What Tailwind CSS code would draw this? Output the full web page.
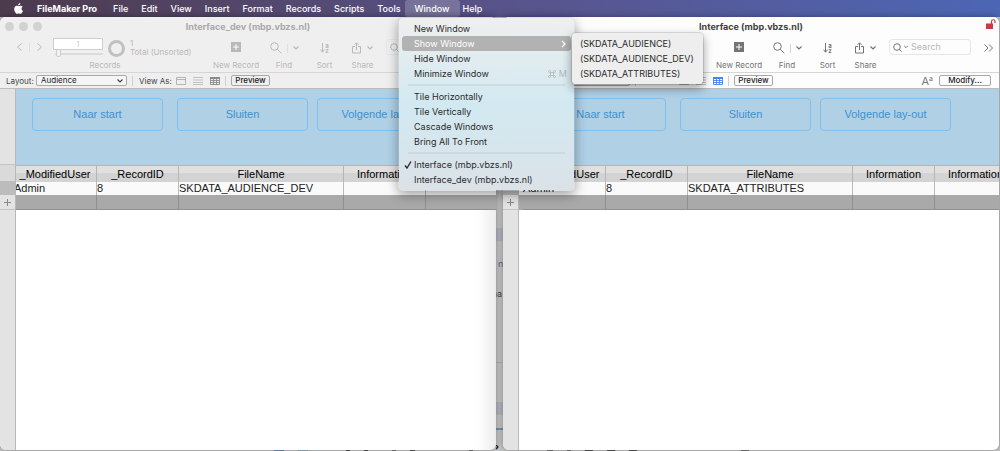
<!DOCTYPE html>
<html lang="nl">
<head>
    <meta charset="UTF-8">
    <meta name="viewport" content="width=device-width, initial-scale=1.0">
    <title>FileMaker Pro</title>
    <script src="https://cdn.jsdelivr.net/npm/@tailwindcss/browser@4"></script>
</head>
<body class="h-screen overflow-hidden flex flex-col relative bg-[#c6c6c6] font-['Inter','Liberation_Sans',sans-serif] text-[9px] leading-[15px] text-[#2b2b2b]">

    <!-- Menu bar -->
    <header class="h-[17px] shrink-0 flex items-center pl-[14px] bg-linear-to-r from-[#4c3a4d] via-[#58538a] to-[#4c66b4] text-white font-medium">
        <svg class="w-[9px] h-[11px] mr-[14px] -mt-px" viewBox="0 0 18 22" fill="currentColor"><path d="M12.6 0c.1 1.300-.4 2.500-1.200 3.500-.8.900-2 1.600-3.200 1.500-.1-1.200.5-2.500 1.200-3.300C10.200.7 11.600.1 12.600 0zM17.300 7.500c-1.400.900-2.200 2.100-2.200 3.800 0 1.900 1.100 3.400 2.900 4.100-.4 1.300-1.100 2.600-1.900 3.800-.9 1.300-1.800 2.600-3.200 2.600s-1.800-.8-3.400-.8-2.100.8-3.400.9c-1.400.1-2.400-1.400-3.300-2.700C.900 16.500-.6 11.700 1.300 8.400c.9-1.600 2.600-2.700 4.400-2.700 1.400 0 2.700.9 3.500.9s2.400-1.100 4.100-.9c.7 0 2.700.3 4 1.800z"/></svg>
        <nav class="flex items-center h-full gap-[13px]">
            <button class="font-bold mr-[3px]">FileMaker Pro</button>
            <button>File</button>
            <button>Edit</button>
            <button>View</button>
            <button>Insert</button>
            <button>Format</button>
            <button>Records</button>
            <button>Scripts</button>
            <button>Tools</button>
            <button class="h-full px-[10px] -ml-[9px] -mr-[10px] rounded-[3px] bg-white/20">Window</button>
            <button>Help</button>
        </nav>
    </header>

    <!-- Desktop with the two windows -->
    <main id="desktop" class="relative flex-1 min-h-0 flex gap-[7px] pr-px pb-px">
        <div class="absolute inset-y-0 left-[496px] w-[7px] overflow-hidden text-[#444]">
            <div class="absolute top-[211px] w-full h-[13px] bg-[#b4b6c0]"></div>
            <span class="absolute top-[239px] left-[2px] text-[#5c6680]">n</span>
            <span class="absolute top-[269px] -left-[4px]">aa</span>
            <div class="absolute top-[345px] w-full h-px bg-[#b0b0b0]"></div>
            <span class="absolute top-[357px] -left-[4px] text-[7px] text-[#7a7f90]">e</span>
            <div class="absolute top-[385px] w-full h-[13px] bg-[#b4b6c0]"></div>
            <div class="absolute top-[411px] w-full h-[2px] bg-[#6f93bd]"></div>
            <span class="absolute top-[422px] -left-[1px] font-bold text-black">›</span>
        </div>
        <div class="absolute bottom-0 left-[274px] right-0 h-px flex gap-[14px]">
            <i class="w-[10px] bg-[#5b93c4]"></i><i class="w-[10px] bg-[#8fb4d4]"></i><i class="w-[4px] ml-[24px] bg-[#555]"></i><i class="w-[4px] bg-[#555]"></i><i class="w-[4px] ml-[10px] bg-[#777]"></i><i class="w-[5px] bg-[#555]"></i><i class="w-[4px] ml-[40px] bg-[#777]"></i><i class="w-[6px] ml-[60px] bg-[#777]"></i><i class="w-[4px] bg-[#777]"></i><i class="w-[8px] bg-[#555]"></i><i class="w-[8px] bg-[#555]"></i><i class="w-[8px] bg-[#555]"></i><i class="w-[8px] ml-[90px] bg-[#777]"></i>
        </div>
    </main>

    <!-- Window menu -->
    <div class="absolute z-20 top-[17px] left-[398px] w-[177px] pt-[3px] pb-[3px] px-[3px] rounded-[5px] border border-black/10 shadow-[0_4px_12px_rgba(0,0,0,0.35)] bg-linear-to-b from-[#efefef] via-[#d2e9f1] to-[#dbe2e8] bg-clip-padding flex flex-col">
        <button class="h-[15px] px-[12px] text-left">New Window</button>
        <button class="h-[15px] pl-[12px] pr-[5px] rounded-[3px] bg-[#b2b2b2] text-white flex items-center justify-between">Show Window
            <svg class="w-[5px] h-[8px]" viewBox="0 0 5 8" fill="none" stroke="currentColor" stroke-width="1.300"><path d="M1 1l3 3-3 3"/></svg>
        </button>
        <button class="h-[15px] px-[12px] text-left">Hide Window</button>
        <button class="h-[15px] pl-[12px] pr-[4px] flex items-center justify-between">Minimize Window
            <span class="flex items-center gap-[3px] text-[#b3b8ba]"><svg class="w-[8px] h-[8px]" viewBox="0 0 16 16" fill="none" stroke="currentColor" stroke-width="1.600"><path d="M5 5h6v6H5zM5 5H3a2 2 0 1 1 2-2zM11 5V3a2 2 0 1 1 2 2zM11 11h2a2 2 0 1 1-2 2zM5 11v2a2 2 0 1 1-2-2z"/></svg>M</span>
        </button>
        <hr class="my-[3px] mx-[6px] h-[2px] border-0 bg-black/5">
        <button class="h-[15px] px-[12px] text-left">Tile Horizontally</button>
        <button class="h-[15px] px-[12px] text-left">Tile Vertically</button>
        <button class="h-[15px] px-[12px] text-left">Cascade Windows</button>
        <button class="h-[15px] px-[12px] text-left">Bring All To Front</button>
        <hr class="my-[3px] mx-[6px] h-[2px] border-0 bg-black/5">
        <button class="h-[15px] pl-[2px] flex items-center gap-[2px]">
            <svg class="w-[8px] h-[8px]" viewBox="0 0 8 8" fill="none" stroke="currentColor" stroke-width="1.400"><path d="M1 4.500l2 2.500 4-6.500"/></svg>
            Interface (mbp.vbzs.nl)
        </button>
        <button class="h-[15px] px-[12px] text-left">Interface_dev (mbp.vbzs.nl)</button>
    </div>

    <!-- Show Window submenu -->
    <div class="absolute z-30 top-[32px] left-[571px] w-[133px] py-[3px] px-[8px] rounded-[5px] border border-black/10 shadow-[0_4px_10px_rgba(0,0,0,0.35)] bg-[#eeeeee] bg-clip-padding flex flex-col">
        <button class="h-[15px] text-left whitespace-nowrap">(SKDATA_AUDIENCE)</button>
        <button class="h-[15px] text-left whitespace-nowrap">(SKDATA_AUDIENCE_DEV)</button>
        <button class="h-[15px] text-left whitespace-nowrap">(SKDATA_ATTRIBUTES)</button>
    </div>

    <script>
        const windows = [
            {
                id: "dev", title: "Interface_dev (mbp.vbzs.nl)", layout: "Audience", file: "SKDATA_AUDIENCE_DEV",
                chrome: "bg-[#efefef]", titleColor: "text-[#a9a9a9]", tools: "text-[#b9b9b9]", lights: "bg-[#d2d2d2]",
                viewIcon: "text-[#8a8a8a]", shift: "-ml-[2px]", modify: "invisible", lock: "hidden", fade: "shadow-[inset_-24px_0_18px_-18px_rgba(0,0,0,0.100)]"
            },
            {
                id: "main", title: "Interface (mbp.vbzs.nl)", layout: "", file: "SKDATA_ATTRIBUTES",
                chrome: "bg-[#fdfdfd]", titleColor: "text-[#404040]", tools: "text-[#747474]", lights: "bg-[#e05a50]",
                viewIcon: "text-[#4a83f0]", shift: "ml-[4px]", modify: "", lock: "", fade: ""
            }
        ];

        const chevron = `<svg class="w-[6px] h-[4px]" viewBox="0 0 6 4" fill="none" stroke="currentColor" stroke-width="1.200"><path d="M.5.500L3 3 5.500.500"/></svg>`;

        function windowHtml(w) {
            return `
            <section class="relative flex-1 min-w-0 flex flex-col overflow-hidden rounded-[6px] shadow-[0_0_6px_rgba(0,0,0,0.35)] bg-white">
                <div class="${w.chrome} border-b border-[#bdbdbd]">
                    <div class="relative h-[19px] flex items-center gap-[5px] pl-[5px]">
                        <i class="size-[9px] rounded-full ${w.lights}"></i>
                        <i class="size-[9px] rounded-full ${w.lights}"></i>
                        <i class="size-[9px] rounded-full ${w.lights}"></i>
                        <h1 class="absolute inset-x-0 text-center font-bold ${w.titleColor}">${w.title}</h1>
                        <svg class="${w.lock} absolute right-[3px] top-[2px] w-[10px] h-[10px] text-[#c93a48]" viewBox="0 0 10 10"><path d="M0 4.500h7V10H0z" fill="currentColor"/><path d="M5.500 5V2.500a1.700 1.700 0 0 1 3.500 0V4" fill="none" stroke="currentColor" stroke-width="1.200"/></svg>
                    </div>
                    <div class="h-[36px] flex items-start pl-[17px] text-[8px] leading-[10px] whitespace-nowrap ${w.tools}">
                        <div class="flex items-center gap-[7px] w-[36px] h-[22px]">
                            <svg class="w-[5px] h-[8px]" viewBox="0 0 5 8" fill="none" stroke="currentColor"><path d="M4.500.500L.500 4l4 3.500"/></svg>
                            <i class="w-px h-[9px] bg-current/30"></i>
                            <svg class="w-[5px] h-[8px]" viewBox="0 0 5 8" fill="none" stroke="currentColor"><path d="M.5.500L4.500 4l-4 3.500"/></svg>
                        </div>
                        <div class="w-[161px]">
                            <div class="flex items-center gap-[5px] h-[24px]">
                                <div class="relative w-[50px] h-[22px] pt-px">
                                    <input aria-label="Record" value="1" class="block w-full h-[12px] border border-[#cfcfcf] bg-white text-center text-[7px] text-[#cccccc]">
                                    <i class="block mt-[3px] ml-[2px] h-[2px] bg-[#dcdcdc]"></i>
                                    <i class="absolute top-[12px] left-[3px] w-[5px] h-[8px] rounded-[2px] border border-[#cccccc] bg-[#f4f4f4]"></i>
                                </div>
                                <i class="size-[17px] rounded-full border-[3px] border-[#c0c0c0]"></i>
                                <p class="leading-[9px]">1<br>Total (Unsorted)</p>
                            </div>
                            <p class="w-[104px] text-center">Records</p>
                        </div>
                        <div class="w-[44px] flex flex-col items-center">
                            <button aria-label="New Record" class="h-[22px] mb-[2px]"><svg class="w-[10px] h-[10px]" viewBox="0 0 10 10"><path d="M0 0h10v10H0z" fill="currentColor"/><path d="M5 2v6M2 5h6" stroke="#fff"/></svg></button>
                            <span>New Record</span>
                        </div>
                        <div class="w-[52px] flex flex-col items-center">
                            <button aria-label="Find" class="h-[24px] flex items-center gap-[5px]">
                                <svg class="w-[12px] h-[12px]" viewBox="0 0 12 12" fill="none" stroke="currentColor"><circle cx="4.500" cy="4.500" r="3.800"/><path d="M7.300 7.300l4 4"/></svg>
                                <i class="w-px h-[9px] bg-current/30"></i>${chevron}
                            </button>
                            <span>Find</span>
                        </div>
                        <div class="w-[29px] flex flex-col items-center">
                            <button aria-label="Sort" class="h-[24px] flex items-center">
                                <svg class="w-[5px] h-[10px]" viewBox="0 0 5 10" fill="none" stroke="currentColor"><path d="M2.500 0v9M.5 6.700l2 2.500 2-2.500"/></svg>
                                <span class="text-[6px] leading-[5px] font-bold">a<br>z</span>
                            </button>
                            <span>Sort</span>
                        </div>
                        <div class="w-[47px] flex flex-col items-center">
                            <button aria-label="Share" class="h-[24px] flex items-center gap-[6px]">
                                <svg class="w-[9px] h-[12px]" viewBox="0 0 9 12" fill="none" stroke="currentColor"><path d="M3 4.500H.500v6.500h8V4.500H6M4.500 8V1M2.500 2.800l2-2 2 2"/></svg>${chevron}
                            </button>
                            <span>Share</span>
                        </div>
                        <label class="mt-[3px] w-[82px] h-[16px] px-[3px] rounded-[3px] border border-[#e6e6e6] flex items-center gap-[2px]">
                            <svg class="shrink-0 w-[9px] h-[9px]" viewBox="0 0 9 9" fill="none" stroke="currentColor"><circle cx="4" cy="4" r="3.300"/><path d="M6.300 6.300l2.400 2.400"/></svg>
                            <svg class="shrink-0 w-[4px] h-[4px]" viewBox="0 0 6 4" fill="none" stroke="currentColor" stroke-width="1.500"><path d="M.5.500L3 3 5.500.500"/></svg>
                            <input type="text" placeholder="Search" aria-label="Search" class="ml-px min-w-0 w-full text-[9px] placeholder:text-[#b8b8b8]">
                        </label>
                        <button aria-label="More" class="ml-auto mr-[6px] h-[24px]"><svg class="w-[9px] h-[8px]" viewBox="0 0 9 8" fill="none" stroke="currentColor"><path d="M.5.500L4 4 .5 7.500M5 .5L8.500 4 5 7.500"/></svg></button>
                    </div>
                    <div class="h-[16px] border-t border-[#d6d6d6] flex items-center pl-[6px] pr-[8px] text-[8px] leading-[10px] text-[#444]">
                        <label for="layout-${w.id}" class="w-[30px]">Layout:</label>
                        <div class="relative w-[91px]">
                            <select id="layout-${w.id}" class="block appearance-none w-full h-[11px] pl-[4px] rounded-[2px] border border-[#a8a8a8] bg-white/40 leading-[9px] text-[#222]"><option>${w.layout}</option></select>
                            <span class="absolute right-[4px] top-[4px]">${chevron}</span>
                        </div>
                        <i class="w-px h-[10px] ml-[5px] mr-[6px] bg-[#d0d0d0]"></i>
                        <span class="w-[37px]">View As:</span>
                        <div class="flex gap-[7px] text-[#b5b5b5]">
                            <svg class="w-[10px] h-[8px]" viewBox="0 0 10 8" fill="none" stroke="currentColor"><path d="M.5.500h9v7h-9zM0 2.500h10"/></svg>
                            <svg class="w-[10px] h-[8px]" viewBox="0 0 10 8" stroke="currentColor" stroke-width=".8"><path d="M0 .5h10M0 3h10M0 5.500h10M0 7.500h10"/></svg>
                            <svg class="w-[10px] h-[8px] ${w.viewIcon}" viewBox="0 0 10 8" fill="none" stroke="currentColor"><path d="M0 1h10" stroke-width="2"/><path d="M.5 1v6.500h9V1M0 3.500h10M0 5.500h10M3.500 2v6M6.500 2v6" stroke-width=".9"/></svg>
                        </div>
                        <i class="w-px h-[10px] ml-[5px] mr-[5px] bg-[#d0d0d0]"></i>
                        <button class="w-[39px] h-[11px] rounded-[2px] border border-[#a8a8a8] font-medium leading-[9px] text-[#222]">Preview</button>
                        <span class="${w.modify} ml-auto mr-[6px] text-[11px] text-[#777]">A<sup class="text-[7px]">a</sup></span>
                        <button class="${w.modify} w-[52px] h-[11px] rounded-[2px] border border-[#a8a8a8] font-medium leading-[9px] text-[#222]">Modify...</button>
                    </div>
                </div>
                <div class="flex-1 min-h-0 flex ${w.fade}">
                    <aside class="w-[16px] shrink-0 border-r border-[#b8b8b8] bg-[#e3e3e3] text-center text-[#888]">
                        <div class="h-[76px] border-b border-[#c4c4c4]"></div>
                        <div class="h-[16px] bg-[#dadada]"></div>
                        <div class="h-[14px] bg-[#bcbcbc]"></div>
                        <button aria-label="Add record" class="w-full h-[15px] border-b border-[#c4c4c4] flex items-center justify-center"><svg class="w-[7px] h-[7px]" viewBox="0 0 7 7" stroke="currentColor"><path d="M3.500 0v7M0 3.500h7"/></svg></button>
                    </aside>
                    <div class="flex-1 min-w-0 overflow-hidden font-['Liberation_Sans',Arial,sans-serif] text-[11px]">
                        <div class="h-[76px] pt-[9px] pl-[16px] flex items-start gap-[14px] bg-[#b0d0e6] text-[#4190cc]">
                            <button class="w-[131px] shrink-0 h-[33px] rounded-[4px] border border-[#7dc0ef]">Naar start</button>
                            <button class="w-[131px] shrink-0 h-[33px] rounded-[4px] border border-[#7dc0ef]">Sluiten</button>
                            <button class="w-[131px] shrink-0 h-[33px] -ml-[5px] rounded-[4px] border border-[#7dc0ef]">Volgende lay-out</button>
                        </div>
                        <div class="bg-[linear-gradient(#e0e0e0_8px,#d3d3d3_8px,#d3d3d3_17px,#fafafa_17px,#fafafa_30px,#a9a9a9_30px)]">
                            <table class="w-[494px] table-fixed border-separate border-spacing-0 text-[#222] ${w.shift}">
                                <colgroup><col class="w-[83px]"><col class="w-[82px]"><col class="w-[165px]"><col class="w-[82px]"><col class="w-[82px]"></colgroup>
                                <thead>
                                    <tr class="h-[17px] leading-[15px] text-black whitespace-nowrap">
                                        <th class="p-0 font-normal border-t border-r border-[#b5b5b5]">_ModifiedUser</th>
                                        <th class="p-0 font-normal border-t border-r border-[#b5b5b5]">_RecordID</th>
                                        <th class="p-0 font-normal border-t border-r border-[#b5b5b5]">FileName</th>
                                        <th class="p-0 font-normal border-t border-r border-[#b5b5b5]">Information</th>
                                        <th class="p-0 font-normal border-t border-r border-[#b5b5b5]">Information</th>
                                    </tr>
                                </thead>
                                <tbody>
                                    <tr class="h-[13px] leading-[13px] bg-[#fafafa]">
                                        <td class="p-0 border-r border-[#bbb]">Admin</td>
                                        <td class="p-0 border-r border-[#bbb]">8</td>
                                        <td class="p-0 border-r border-[#bbb]">${w.file}</td>
                                        <td class="p-0 border-r border-[#bbb]"></td>
                                        <td class="p-0 border-r border-[#bbb]"></td>
                                    </tr>
                                    <tr class="h-[15px] bg-[#a9a9a9]">
                                        <td class="p-0 border-r border-b border-[#909090]"></td>
                                        <td class="p-0 border-r border-b border-[#909090]"></td>
                                        <td class="p-0 border-r border-b border-[#909090]"></td>
                                        <td class="p-0 border-r border-b border-[#909090]"></td>
                                        <td class="p-0 border-r border-b border-[#909090]"></td>
                                    </tr>
                                </tbody>
                            </table>
                        </div>
                    </div>
                </div>
            </section>`;
        }

        document.getElementById("desktop").insertAdjacentHTML("beforeend", windows.map(windowHtml).join(""));
    </script>
</body>
</html>
